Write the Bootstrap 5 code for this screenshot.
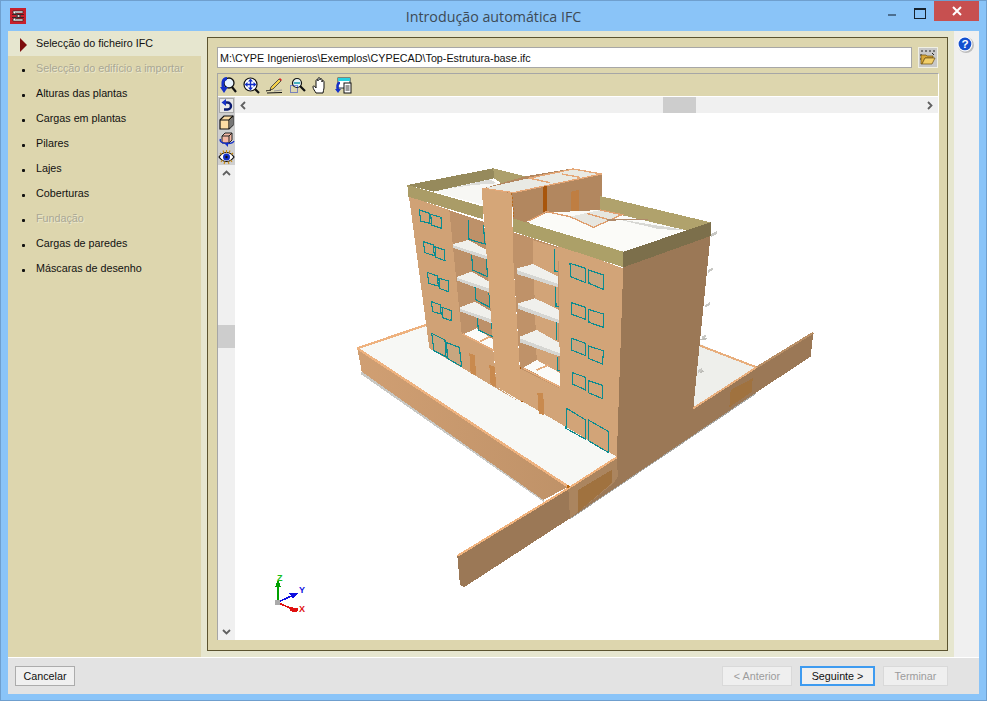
<!DOCTYPE html>
<html lang="pt">
<head>
<meta charset="UTF-8">
<title>Introdução automática IFC</title>
<link href="https://cdn.jsdelivr.net/npm/bootstrap@5.3.2/dist/css/bootstrap.min.css" rel="stylesheet">
<style>
  html, body { margin: 0; background: #8ac4f8; }
  body { font-family: "Liberation Sans", Arial, sans-serif; font-size: 10.75px; color: #111; overflow: hidden; }
  .app-window { width: 987px; height: 701px; background: #8ac4f8; border: 1px solid #6f9fce; }
  .title-bar { height: 30px; flex: none; display: grid; grid-template-columns: 1fr auto 1fr; }
  .title-logo { padding: 6px 0 0 9px; }
  .title-text { font-family: "Open Sans", sans-serif; font-size: 14.25px; color: #3d4a55; line-height: 31px; }
  .title-ctrls { justify-content: flex-end; padding-right: 7px; }
  .ctrl-min { width: 8px; height: 2px; background: #4c6f90; margin: 13px 18px 0 0; }
  .ctrl-max { width: 10px; height: 8px; border: 1px solid #16222e; border-top-width: 2px; margin: 7px 8px 0 0; box-sizing: content-box; }
  .ctrl-close { width: 45px; height: 20px; background: #c75050; display: flex; align-items: center; justify-content: center; }
  .client-area { margin: 0 7px 6px 7px; min-height: 0; }
  .steps-col { width: 193px; flex: none; background: #ddd6ae; }
  .step-row { height: 25px; line-height: 25px; padding-left: 28px; position: relative; white-space: nowrap; }
  .step-row::before { content: ""; position: absolute; left: 14px; top: 13px; width: 3px; height: 3px; background: #111; border-radius: 1px; }
  .step-row.is-off { color: #a9a794; text-shadow: 1px 1px 0 #ece8cf; }
  .step-row.is-now { background: #e6e6cf; }
  .step-row.is-now::before { left: 12px; top: 7px; width: 0; height: 0; border-radius: 0; background: none; border-left: 7px solid #7d0c0c; border-top: 7px solid transparent; border-bottom: 7px solid transparent; }
  .steps-list { margin-top: 0; margin-bottom: 0; }
  .page-strip { background: #e6e6cf; padding: 6px; min-width: 0; }
  .page-frame { background: #ddd6ae; border: 1px solid #5b532f; height: 100%; padding: 9px 9px 10px 9px; }
  .path-input.form-control { height: 21px; padding: 0 2px; font-size: 10.75px; border: 1px solid #a7a7a7; border-radius: 0; color: #111; font-family: "Liberation Sans", sans-serif; box-shadow: none; }
  .open-btn { width: 20px; height: 21px; margin-left: 6px; background: #c8c8c8; border: 1px solid #f0f0e4; flex: none; display: flex; align-items: center; justify-content: center; }
  .viewer { margin-top: 5px; min-height: 0; border-top: 1px solid #a6a6a6; border-left: 1px solid #a6a6a6; width: 722px; border-right: 1px solid #fff; }
  .viewer-tools { height: 22px; flex: none; gap: 6px; padding-left: 2px; align-items: center; }
  .viewer-tools svg { display: block; }
  .viewer-body { min-height: 0; }
  .side-tools { width: 17px; flex: none; background: #f0f0f0; border-top: 1px solid #fff; }
  .side-btn { height: 17px; background: #cfcfcf; display: flex; align-items: center; justify-content: center; }
  .scroll-track { background: #f0f0f0; color: #666; }
  .scroll-v { min-height: 0; }
  .arrow-box { width: 16px; height: 16px; flex: none; display: flex; align-items: center; justify-content: center; }
  .thumb-v { height: 23px; background: #cdcdcd; margin-top: 144px; }
  .scroll-h { height: 16px; flex: none; border-top: 1px solid #fff; box-sizing: content-box; }
  .thumb-h { width: 33px; height: 16px; background: #cdcdcd; margin-left: 412px; }
  .model-view { min-height: 0; background: #fff; overflow: hidden; }
  .model-view svg { display: block; }
  .model-view g { shape-rendering: crispEdges; }
  .help-strip { width: 25px; flex: none; background: #f0f0f0; padding: 4px 0 0 3px; }
  .foot-bar { height: 37px; flex: none; background: #e3e3e3; border-top: 1px solid #fff; padding: 8px 31px 0 7px; }
  .wiz-btn.btn { height: 20px; padding: 0; font-size: 10.75px; line-height: 18px; border-radius: 0; background: #f0f0f0; border: 1px solid #acacac; color: #111; }
  .wiz-btn.btn:disabled { color: #9c9c9c; border-color: #d9d9d9; opacity: 1; background: #efefef; }
  .wiz-btn.is-default { border: 2px solid #3e9bf0; line-height: 16px; }
  .w-cancel { width: 60px; }
  .w-prev { width: 70px; }
  .w-next { width: 75px; margin-left: 8px; }
  .w-end { width: 65px; margin-left: 8px; }
  .win { fill: none; stroke: #0c8c90; stroke-width: 3.4; }
  .win-t { fill: #c8a67f; stroke: #0c8c90; stroke-width: 3.4; }
</style>
</head>
<body>
<div class="app-window d-flex flex-column">

  <div class="title-bar">
    <div class="title-logo">
      <svg width="16" height="16" viewBox="0 0 16 16"><rect width="16" height="16" fill="#c8202c"/><path d="M3 3h10v2H5l6 3-6 3h8v2H3v-2l5-3-5-3z" fill="#fff" stroke="#222" stroke-width=".7"/><path d="M2 6.500h12M2 9.500h12" stroke="#222" stroke-width=".8"/></svg>
    </div>
    <div class="title-text">Introdução automática IFC</div>
    <div class="title-ctrls d-flex">
      <div class="ctrl-min"></div>
      <div class="ctrl-max"></div>
      <div class="ctrl-close"><svg width="10" height="10" viewBox="0 0 10 10"><path d="M1 1l8 8M9 1l-8 8" stroke="#fff" stroke-width="2"/></svg></div>
    </div>
  </div>

  <div class="client-area flex-fill d-flex flex-column">
    <div class="d-flex flex-fill" style="min-height:0">
      <div class="steps-col">
        <ul class="list-unstyled steps-list">
          <li class="step-row is-now">Selecção do ficheiro IFC</li>
          <li class="step-row is-off">Selecção do edifício a importar</li>
          <li class="step-row">Alturas das plantas</li>
          <li class="step-row">Cargas em plantas</li>
          <li class="step-row">Pilares</li>
          <li class="step-row">Lajes</li>
          <li class="step-row">Coberturas</li>
          <li class="step-row is-off">Fundação</li>
          <li class="step-row">Cargas de paredes</li>
          <li class="step-row">Máscaras de desenho</li>
        </ul>
      </div>

      <div class="page-strip flex-fill">
        <div class="page-frame d-flex flex-column">
          <div class="d-flex">
            <input class="form-control path-input" type="text" value="M:\CYPE Ingenieros\Exemplos\CYPECAD\Top-Estrutura-base.ifc">
            <div class="open-btn">
              <svg width="16" height="15" viewBox="0 0 16 15"><path d="M1 1h2M5 1h2M9 1h2M13 1h2M1 4v2M1 8v2" stroke="#222"/><path d="M12 3l2 2" stroke="#222"/><path d="M1 5h5l1 1h6v2H5l-3 6H1z" fill="#d9a83a" stroke="#6b4d10" stroke-width=".7"/><path d="M2 14l3-6h10l-3 6z" fill="#f2cf6a" stroke="#6b4d10" stroke-width=".7"/></svg>
            </div>
          </div>

          <div class="viewer flex-fill d-flex flex-column">
            <div class="viewer-tools d-flex">
              <svg width="17" height="17" viewBox="0 0 17 17"><circle cx="9" cy="6" r="5" fill="#e8f4ff" stroke="#111" stroke-width="1.300"/><path d="M12 10l4 5" stroke="#111" stroke-width="2.200"/><path d="M7 1.500C2 1.500 2 8 4 12" fill="none" stroke="#1430c8" stroke-width="2.800"/><path d="M0 10l4 6 4-6z" fill="#1430c8"/></svg>
              <svg width="17" height="17" viewBox="0 0 17 17"><circle cx="7.500" cy="7.500" r="6.500" fill="#fff" stroke="#111" stroke-width="1.200"/><path d="M7.500 3v9M3 7.500h9" stroke="#1430c8" stroke-width="1.400"/><path d="M7.500 1.500l-2.500 3h5zM7.500 13.500l-2.500-3h5zM1.500 7.500l3-2.500v5zM13.500 7.500l-3-2.500v5z" fill="#1430c8"/><path d="M12 12l4 4" stroke="#111" stroke-width="2.200"/></svg>
              <svg width="17" height="17" viewBox="0 0 17 17"><path d="M1 16l15-.5" stroke="#111"/><path d="M8 14l8-1" stroke="#999"/><path d="M5 10l8-8 2 2-8 8-3 1z" fill="#f4d14a" stroke="#333" stroke-width=".8"/><path d="M13 2l1-1 2 2-1 1z" fill="#d22"/><path d="M0 14c2-1 3 0 5-1" stroke="#111" fill="none"/></svg>
              <svg width="17" height="17" viewBox="0 0 17 17"><circle cx="8" cy="6" r="4.500" fill="#e6f6f6" stroke="#111" stroke-width="1.200"/><path d="M5 6h6" stroke="#19a" stroke-width="1.500"/><path d="M11 9l5 5" stroke="#111" stroke-width="2.200"/><rect x="1.500" y="8.500" width="7" height="7" fill="none" stroke="#1430c8" stroke-dasharray="1 1"/></svg>
              <svg width="17" height="17" viewBox="0 0 17 17"><path d="M4 16c-1-2-3-4-3-6s2-1 3 1V4c0-2 2-2 2 0V2c0-2 2-2 2 0v1c0-2 2-2 2 0v2c0-2 2-2 2 0v6c0 2-1 3-1 5z" fill="#fff" stroke="#111"/></svg>
              <svg width="17" height="17" viewBox="0 0 17 17"><rect x="3" y="1" width="12" height="10" fill="#fff" stroke="#234"/><rect x="3" y="1" width="12" height="3" fill="#28d0e0"/><rect x="9" y="6" width="7" height="10" fill="#fff" stroke="#111"/><path d="M10.500 9h4M10.500 11h4M10.500 13h4" stroke="#333"/><path d="M5 6C2 6 2 10 3 13" fill="none" stroke="#1430c8" stroke-width="2.400"/><path d="M0 12l3 4 3-4z" fill="#1430c8"/></svg>
            </div>

            <div class="viewer-body flex-fill d-flex">
              <div class="side-tools d-flex flex-column">
                <div class="side-btn"><svg width="15" height="15" viewBox="0 0 15 15"><rect x=".5" y=".5" width="14" height="14" fill="#e8e8e8" stroke="#a8a8a8"/><path d="M6 4.500h2.500a3 3 0 0 1 0 7H5" fill="none" stroke="#0a1a70" stroke-width="2.400"/><path d="M7 1L2.500 4.500 7 8z" fill="#1430c8"/></svg></div>
                <div class="side-btn"><svg width="15" height="15" viewBox="0 0 15 15"><path d="M1 5l4-4h9v9l-4 4H1z" fill="#fbdca4" stroke="#111" stroke-width="1.200"/><path d="M1 5h9v9M10 5l4-4" fill="none" stroke="#111" stroke-width="1.200"/><path d="M10.500 5.500l3.500-3.500v8l-3.500 3.500z" fill="#777"/></svg></div>
                <div class="side-btn"><svg width="16" height="16" viewBox="0 0 16 16"><path d="M3 4l3-3h7v7l-3 3H3z" fill="#f4b8a4" stroke="#222"/><path d="M3 4h7v7M10 4l3-3" fill="none" stroke="#222"/><path d="M1.500 7C-1 12 13 13 15 9" fill="none" stroke="#1430c8" stroke-width="1.400"/><path d="M6 12l3 3v-5z" fill="#1430c8"/></svg></div>
                <div class="side-btn"><svg width="17" height="16" viewBox="0 0 17 16"><path d="M1 8c4-6 11-6 15 0-4 6-11 6-15 0z" fill="#fff" stroke="#111" stroke-width="1.200"/><circle cx="8.500" cy="8" r="3.500" fill="#1430c8"/><circle cx="8.500" cy="8" r="1.200" fill="#111"/><path d="M2 4l1.500 1.500M5 1.500l1 2.500M8.500 1v3M12 1.500l-1 2.500M15 4l-1.500 1.500M3 13l1.500-2M6 15l1-2.500M11 15l-1-2.500M14 13l-1.500-2" stroke="#c98a10" stroke-width="1.100"/></svg></div>
                <div class="scroll-track scroll-v flex-fill d-flex flex-column">
                  <div class="arrow-box"><svg width="9" height="6" viewBox="0 0 9 6"><path d="M1 5l3.500-3.500L8 5" fill="none" stroke="#606060" stroke-width="1.800"/></svg></div>
                  <div class="thumb-v"></div>
                  <div class="flex-fill"></div>
                  <div class="arrow-box"><svg width="9" height="6" viewBox="0 0 9 6"><path d="M1 1l3.500 3.500L8 1" fill="none" stroke="#606060" stroke-width="1.800"/></svg></div>
                </div>
              </div>

              <div class="flex-fill d-flex flex-column" style="min-width:0">
                <div class="scroll-track scroll-h d-flex">
                  <div class="arrow-box"><svg width="6" height="9" viewBox="0 0 6 9"><path d="M5 1L1.500 4.500 5 8" fill="none" stroke="#606060" stroke-width="1.800"/></svg></div>
                  <div class="thumb-h"></div>
                  <div class="flex-fill"></div>
                  <div class="arrow-box"><svg width="6" height="9" viewBox="0 0 6 9"><path d="M1 1l3.500 3.500L1 8" fill="none" stroke="#606060" stroke-width="1.800"/></svg></div>
                </div>
                <div class="model-view flex-fill">
                  <!-- viewBox is in window coordinates so the model lines up with the capture -->
                  <svg width="704" height="527" viewBox="235 113 704 527">
                    <defs>
                      <linearGradient id="wallLeft" x1="0" y1="0" x2="1" y2="0"><stop offset="0" stop-color="#d09f73"/><stop offset="1" stop-color="#bf9268"/></linearGradient>
                    </defs>

                    <!-- base, in 3x crop coordinates of the lower part -->
                    <g transform="translate(340 320) scale(.33333)">
                      <polygon points="65,155 610,540 615,548 62,162" fill="#c8c8c4"/>
                      <polygon points="690,598 1248,222 1248,216 686,592" fill="#a8a8a4"/>
                      <polygon points="52,85 258,15 840,412 685,500" fill="#f7f8f5"/>
                      <polygon points="52,85 685,500 610,540 65,155" fill="url(#wallLeft)"/>
                      <path d="M52 85L258 15M52 85L685 500" stroke="#eeb27f" stroke-width="7" fill="none"/>
                      <polygon points="1075,70 1250,142 1060,268 1050,100" fill="#eeefeb"/>
                      <path d="M1078 76L1250 142L1060 265" stroke="#e8ae7c" stroke-width="6" fill="none"/>
                      <path d="M1090 60l10-6M1080 158l10-6M1072 60l26-4" stroke="#bdbdb8" stroke-width="5" fill="none"/>
                      <!-- long front wall -->
                      <polygon points="352,708 685,505 830,412 1060,265 1250,142 1420,38 1412,110 1248,218 690,595 372,802 360,795" fill="#9b7856"/>
                      <polygon points="685,505 830,412 834,470 820,490 690,595" fill="#ab855f"/>
                      <polygon points="715,510 815,450 815,490 715,575" fill="#a0723f"/>
                      <polygon points="1172,210 1238,175 1236,215 1168,262" fill="#a0723f"/>
                      <path d="M352 708L685 505L830 412" stroke="#f0b27c" stroke-width="6" fill="none"/>
                      <path d="M1060 265L1250 142" stroke="#e8ae7c" stroke-width="5" fill="none"/>
                      <path d="M1250 142L1420 38" stroke="#b98f66" stroke-width="6" fill="none"/>
                      <path d="M680 500h10M685 495v10" stroke="#b8660f" stroke-width="5"/>
                    </g>

                    <!-- building, in 3x crop coordinates of the upper part -->
                    <g transform="translate(340 160) scale(.33333)">
                      <!-- roof of left wing -->
                      <polygon points="202,75 460,25 462,55 280,95" fill="#968a5c"/>
                      <polygon points="460,25 560,50 520,95 462,55" fill="#ada06c"/>
                      <polygon points="280,95 450,58 480,75 432,90 432,135" fill="#f7f7f4"/>
                      <polygon points="330,85 450,58 470,70 400,75" fill="#dcdcd8"/>
                      <!-- back block on the roof -->
                      <polygon points="430,85 560,48 700,25 785,42 785,170 570,190 520,180 515,100" fill="#b2875f"/>
                      <polygon points="430,85 565,55 700,27 785,42 612,78 520,98" fill="#e9eae4"/>
                      <path d="M430 85L520 98L785 42M565 55L700 27L785 42M570 55L630 68M665 42L720 52" stroke="#e5a878" stroke-width="4" fill="none"/>
                      <polygon points="608,80 620,78 620,155 608,155" fill="#a8560c"/>
                      <polygon points="694,95 716,90 716,165 694,165" fill="#bf7e42"/>
                      <!-- left facade and recess -->
                      <polygon points="325,150 432,185 465,570 365,520" fill="#bd9169"/>
                      <polygon points="207,110 328,150 365,520 460,570 470,680 545,730 268,565" fill="#d0a276"/>
                      <polygon points="340,252 385,240 440,270 440,298 340,262" fill="#f0f0ec"/>
                      <polygon points="340,256 440,288 440,298 340,264" fill="#d6d6d2"/>
                      <polygon points="352,350 395,335 447,365 447,397 352,362" fill="#f0f0ec"/>
                      <polygon points="352,354 447,385 447,397 352,362" fill="#d6d6d2"/>
                      <polygon points="360,442 405,425 455,455 455,490 360,454" fill="#f0f0ec"/>
                      <polygon points="360,446 455,478 455,490 360,454" fill="#d6d6d2"/>
                      <polygon points="372,522 410,505 462,540 462,570" fill="#fbfbf8"/>
                      <path d="M368 522L462 572M420 545L450 530" stroke="#e5ac7c" stroke-width="5" fill="none"/>
                      <polyline class="win" points="385,180 387,238 435,252 430,195"/>
                      <polyline class="win" points="395,285 398,330 442,350 440,298"/>
                      <polyline class="win" points="405,380 408,420 450,442 447,400"/>
                      <polyline class="win" points="412,475 415,510 458,530 455,490"/>
                      <polygon class="win" points="238,150 268,160 270,190 242,183"/>
                      <polygon class="win" points="272,163 303,172 305,205 275,195"/>
                      <polygon class="win" points="250,245 280,255 283,287 255,278"/>
                      <polygon class="win" points="285,260 313,270 315,302 288,292"/>
                      <polygon class="win" points="262,337 292,348 295,378 266,370"/>
                      <polygon class="win" points="297,355 325,363 325,395 298,385"/>
                      <polygon class="win" points="274,425 302,435 303,462 278,455"/>
                      <polygon class="win" points="306,442 335,452 333,482 308,473"/>
                      <polygon class="win-t" points="275,520 315,540 318,590 282,572"/>
                      <polygon class="win-t" points="320,548 358,562 365,620 322,595"/>
                      <polygon points="388,580 405,585 408,645 392,640" fill="#c98a4e"/>
                      <polygon points="448,615 465,620 468,680 452,675" fill="#c98a4e"/>
                      <!-- right recess -->
                      <polygon points="515,215 660,262 660,700 540,630" fill="#bf9269"/>
                      <polygon points="578,240 655,265 655,640 590,600" fill="#d2a478"/>
                      <polyline class="win" points="643,268 645,335 655,335"/>
                      <polyline class="win" points="647,382 648,440 657,440"/>
                      <polyline class="win" points="650,485 650,540"/>
                      <polyline class="win" points="652,590 652,630 662,632"/>
                      <polygon points="530,325 580,312 655,350 655,382 530,340" fill="#f0f0ec"/>
                      <polygon points="530,330 655,372 655,382 530,342" fill="#d6d6d2"/>
                      <polygon points="535,430 585,415 657,450 657,490 535,445" fill="#f0f0ec"/>
                      <polygon points="535,435 657,480 657,490 535,447" fill="#d6d6d2"/>
                      <polygon points="540,530 590,510 660,550 660,590 540,545" fill="#f0f0ec"/>
                      <polygon points="540,535 660,580 660,590 540,547" fill="#d6d6d2"/>
                      <polygon points="552,622 590,600 662,640 662,680" fill="#fbfbf8"/>
                      <path d="M590 630L625 615M550 625L662 682" stroke="#e5ac7c" stroke-width="5" fill="none"/>
                      <!-- central pier -->
                      <polygon points="425,85 515,100 520,300 545,725 470,680 460,560" fill="#d5a678"/>
                      <path d="M515 100L522 175" stroke="#b86a1e" stroke-width="3" stroke-dasharray="6 5" fill="none"/>
                      <path d="M541 620L546 725" stroke="#a8560c" stroke-width="5" fill="none"/>
                      <!-- front right facade -->
                      <polygon points="655,255 850,325 835,893 540,720 540,625 660,685" fill="#d2a478"/>
                      <polygon class="win-t" points="690,310 737,325 737,368 692,350"/>
                      <polygon class="win-t" points="745,330 790,345 790,388 747,370"/>
                      <polygon class="win" points="695,428 737,442 737,478 695,463"/>
                      <polygon class="win" points="745,448 790,462 790,502 747,487"/>
                      <polygon class="win-t" points="695,535 737,550 737,587 695,570"/>
                      <polygon class="win" points="745,558 790,572 788,612 745,595"/>
                      <polygon class="win" points="697,638 737,652 737,690 697,672"/>
                      <polygon class="win" points="745,662 788,676 788,716 745,698"/>
                      <polygon class="win" points="680,745 737,780 737,838 678,805"/>
                      <polygon class="win" points="745,780 806,815 806,878 745,842"/>
                      <polygon points="592,698 610,700 612,765 596,760" fill="#c98a4e"/>
                      <!-- tower side, shaded -->
                      <polygon points="850,315 1112,225 1060,745 1060,760 830,905" fill="#9b7856"/>
                      <path d="M1112 222l18-8v8l-18 10M1105 330l14-8v8l-14 8M1095 435l14-8v8l-14 8M1085 530l12-6v8l-12 6M1075 630l12-6v8l-12 6" fill="#c8c8c4"/>
                      <!-- roof of right wing -->
                      <polygon points="780,108 1112,187 1112,200 1035,210 780,150" fill="#b0a26c"/>
                      <polygon points="560,185 620,158 780,150 1035,210 850,275" fill="#fbfbf8"/>
                      <polygon points="820,175 1035,210 960,208" fill="#d8d8d4"/>
                      <polygon points="690,170 780,150 850,165 760,200" fill="#e6e6e0"/>
                      <path d="M565 183L620 155L690 170L760 202L850 162M740 160L810 180M780 150L850 165" stroke="#e0a070" stroke-width="4" fill="none"/>
                      <path d="M800 180L925 178" stroke="#b08a6a" stroke-width="4" fill="none"/>
                      <polygon points="518,175 850,275 850,322 520,215" fill="#aca068"/>
                      <polygon points="850,275 1112,187 1112,228 850,322" fill="#7c6f4b"/>
                      <!-- front parapet of left wing, over the pier -->
                      <polygon points="202,75 430,140 430,178 205,110" fill="#aa9c67"/>
                    </g>

                    <!-- axes -->
                    <g transform="translate(200 560) scale(.33333)">
                      <path d="M234 125V75" stroke="#00a000" stroke-width="6"/>
                      <polygon points="225,80 234,60 243,80" fill="#00a000"/>
                      <path d="M236 125L275 108" stroke="#1010e0" stroke-width="5"/>
                      <polygon points="268,100 298,98 278,116" fill="#1010e0"/>
                      <path d="M238 130L275 146" stroke="#e01010" stroke-width="5"/>
                      <polygon points="268,140 296,146 290,156 272,154" fill="#e01010"/>
                      <rect x="226" y="121" width="14" height="13" fill="#aaa"/>
                    </g>
                    <text x="277" y="581" font-size="9" font-weight="bold" fill="#16c016" font-family="Liberation Sans, sans-serif">Z</text>
                    <text x="299" y="593" font-size="9" font-weight="bold" fill="#1010e0" font-family="Liberation Sans, sans-serif">Y</text>
                    <text x="299" y="612" font-size="9" font-weight="bold" fill="#e01010" font-family="Liberation Sans, sans-serif">X</text>
                  </svg>
                </div>
              </div>
            </div>
          </div>
        </div>
      </div>

      <div class="help-strip">
        <svg width="17" height="17" viewBox="0 0 16 16"><circle cx="8.500" cy="8.500" r="7.500" fill="#bdbdbd"/><circle cx="7.500" cy="7.500" r="7" fill="#fff"/><circle cx="7.500" cy="7.500" r="6" fill="#1450d0"/><text x="7.500" y="11.500" font-size="11" font-weight="bold" fill="#fff" text-anchor="middle" font-family="Liberation Sans, sans-serif">?</text></svg>
      </div>
    </div>

    <div class="foot-bar d-flex">
      <button class="btn wiz-btn w-cancel" type="button">Cancelar</button>
      <div class="flex-fill"></div>
      <button class="btn wiz-btn w-prev" type="button" disabled>&lt; Anterior</button>
      <button class="btn wiz-btn is-default w-next" type="button">Seguinte &gt;</button>
      <button class="btn wiz-btn w-end" type="button" disabled>Terminar</button>
    </div>
  </div>
</div>
<script src="https://cdn.jsdelivr.net/npm/bootstrap@5.3.2/dist/js/bootstrap.bundle.min.js"></script>
</body>
</html>
